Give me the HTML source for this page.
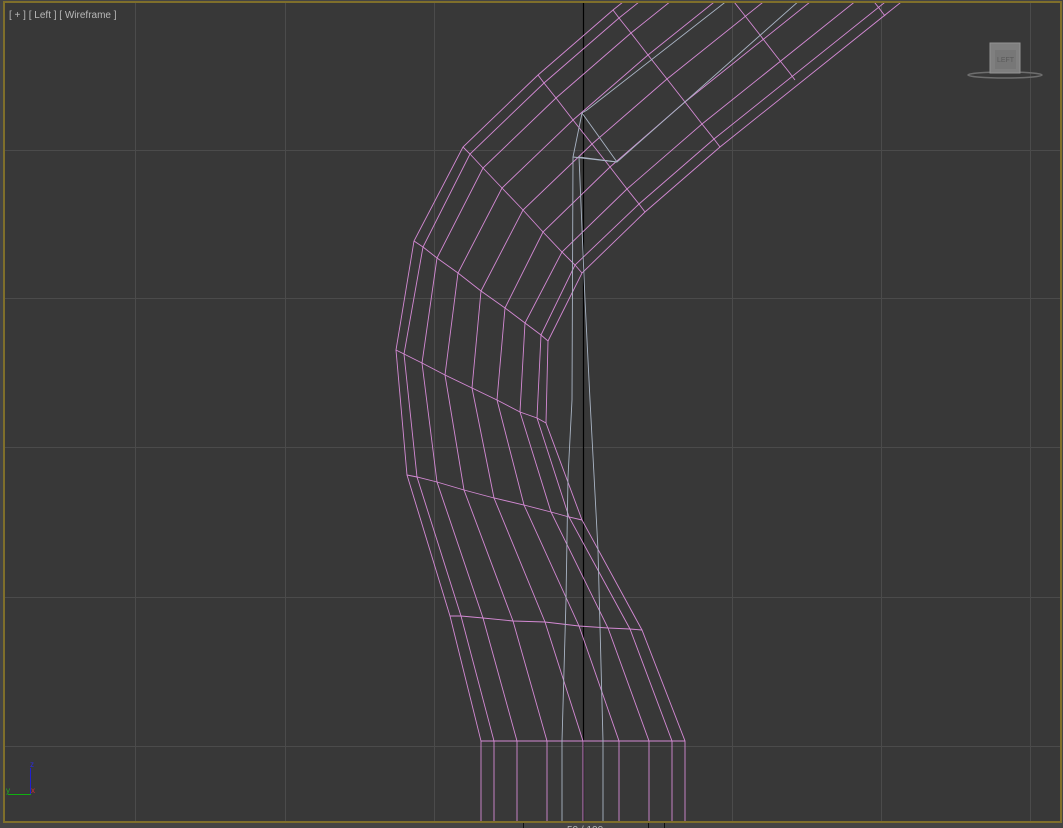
<!DOCTYPE html>
<html><head><meta charset="utf-8"><style>
html,body{margin:0;padding:0;background:#444;width:1063px;height:828px;overflow:hidden}
svg{display:block}
</style></head><body>
<svg width="1063" height="828" viewBox="0 0 1063 828" xmlns="http://www.w3.org/2000/svg">
<rect x="0" y="0" width="1063" height="828" fill="#444"/>
<rect x="4" y="2" width="1057" height="820" fill="#383838"/>
<g stroke="#4b4b4b" stroke-width="1">
<line x1="135.5" y1="2" x2="135.5" y2="822"/><line x1="285.5" y1="2" x2="285.5" y2="822"/>
<line x1="434.5" y1="2" x2="434.5" y2="822"/><line x1="732.5" y1="2" x2="732.5" y2="822"/>
<line x1="881.5" y1="2" x2="881.5" y2="822"/><line x1="1030.5" y1="2" x2="1030.5" y2="822"/>
<line x1="4" y1="150.5" x2="1061" y2="150.5"/><line x1="4" y1="298.5" x2="1061" y2="298.5"/>
<line x1="4" y1="447.5" x2="1061" y2="447.5"/><line x1="4" y1="597.5" x2="1061" y2="597.5"/>
<line x1="4" y1="746.5" x2="1061" y2="746.5"/>
</g>
<line x1="583.5" y1="2" x2="583.5" y2="822" stroke="#000" stroke-width="1.2"/>
<svg x="4" y="2" width="1057" height="820" viewBox="4 2 1057 820" overflow="hidden">
<g fill="none" stroke="#d48ad4" stroke-width="0.9">
<polyline points="481,741 494,741 517,741 547,741 583,741 619,741 649,741 672,741 685,741"/>
<polyline points="450,616 461,616 483,618 513,621 545,622 579,626 608,628 630,629 642,630"/>
<polyline points="407,475 417,477 437,482 464,490 494,498 524,505 551,512 569,517 582,520"/>
<polyline points="396,350 404,354 422,363 445,375 472,388 497,400 520,412 537,418 546,423"/>
<polyline points="414,241 423,247 437,258 458,273 481,291 505,308 525,323 541,335 548,341"/>
<polyline points="463,147 470,154 483,168 502,188 523,210 543,232 562,252 575,265 582,273"/>
<polyline points="538,75 544,83 556,98 573,120 592,144 610,167 627,189 639,204 645,212"/>
<polyline points="613,10 619,18 631,33 648,55 667,79 685,102 702,124 714,139 720,147"/>
<polyline points="688,-57 694,-49 706,-34 723,-12 742,12 760,35 777,57 789,72 795,80"/>
<polyline points="778,-121 784,-113 796,-98 813,-76 832,-52 850,-29 867,-7 879,8 885,16"/>
<polyline points="481,822 481,741 450,616 407,475 396,350 414,241 463,147 538,75 613,10 863,-190"/>
<polyline points="494,822 494,741 461,616 417,477 404,354 423,247 470,154 544,83 619,18 869,-182"/>
<polyline points="517,822 517,741 483,618 437,482 422,363 437,258 483,168 556,98 631,33 881,-167"/>
<polyline points="547,822 547,741 513,621 464,490 445,375 458,273 502,188 573,120 648,55 898,-145"/>
<polyline points="583,822 583,741 545,622 494,498 472,388 481,291 523,210 592,144 667,79 917,-121"/>
<polyline points="619,822 619,741 579,626 524,505 497,400 505,308 543,232 610,167 685,102 935,-98"/>
<polyline points="649,822 649,741 608,628 551,512 520,412 525,323 562,252 627,189 702,124 952,-76"/>
<polyline points="672,822 672,741 630,629 569,517 537,418 541,335 575,265 639,204 714,139 964,-61"/>
<polyline points="685,822 685,741 642,630 582,520 546,423 548,341 582,273 645,212 720,147 970,-53"/>
</g>
<g fill="none" stroke="#a9b4c4" stroke-width="0.9">
<polyline points="562,822 562,741 566,600 568,477 572,400 573,157 582,113 587,110 728,0"/>
<polyline points="603,822 603,741 598,550 590,400 585,300 579,157 617,162 800,0"/>
<line x1="573" y1="157" x2="617" y2="162"/>
<line x1="582" y1="113" x2="617" y2="162"/>
</g>
</svg>
<rect x="4" y="2" width="1057" height="820" fill="none" stroke="#7f6f2b" stroke-width="2"/>
<text x="9" y="18" font-family="Liberation Sans, sans-serif" font-size="10" fill="#b8b8b8">[ + ] [ Left ] [ Wireframe ]</text>
<ellipse cx="1005" cy="75" rx="37" ry="3" fill="none" stroke="#6e6e6e" stroke-width="1.5"/>
<rect x="990" y="43" width="30" height="30" fill="#7f7f7f" stroke="#939393"/>
<rect x="995" y="50" width="21" height="19" fill="#777"/>
<text x="1005.5" y="62" font-family="Liberation Sans, sans-serif" font-size="7" fill="#5a5a5a" text-anchor="middle">LEFT</text>
<line x1="30.5" y1="768" x2="30.5" y2="794" stroke="#2020d0"/>
<line x1="8" y1="794.5" x2="31" y2="794.5" stroke="#10b010"/>
<text x="30" y="767" font-family="Liberation Sans, sans-serif" font-size="8" fill="#2a2ae0">z</text>
<text x="31" y="793" font-family="Liberation Sans, sans-serif" font-size="8" fill="#d03030">x</text>
<text x="6" y="793" font-family="Liberation Sans, sans-serif" font-size="8" fill="#20b020">y</text>
<line x1="523.5" y1="823" x2="523.5" y2="828" stroke="#111"/>
<line x1="648.5" y1="823" x2="648.5" y2="828" stroke="#111"/>
<line x1="664.5" y1="823" x2="664.5" y2="828" stroke="#111"/>
<text x="567" y="833" font-family="Liberation Sans, sans-serif" font-size="10" fill="#bbb">50 / 100</text>
</svg>
</body></html>
